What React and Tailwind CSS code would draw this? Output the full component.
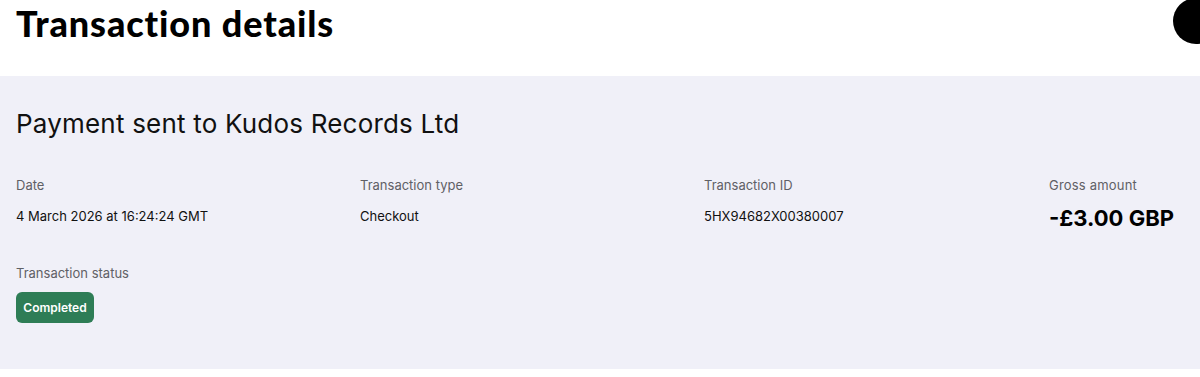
export default function App() {
  const cols = [
    { label: "Date", value: "4 March 2026 at 16:24:24 GMT" },
    { label: "Transaction type", value: "Checkout" },
    { label: "Transaction ID", value: "5HX94682X00380007" },
  ];
  return (
    <div className="w-[1200px] h-[377px] bg-white overflow-hidden relative" style={{ fontFamily: "Inter, 'Liberation Sans', sans-serif" }}>
      <div className="h-[76px] px-4 flex items-start relative">
        <h1 className="text-[36px] leading-none pt-[5px] font-black text-black tracking-[0.9px]" style={{ fontFamily: "Lato, sans-serif" }}>
          Transaction details
        </h1>
        <div className="absolute right-[-19px] top-[-2px] w-[46px] h-[46px] rounded-full bg-black" />
      </div>
      <div className="h-[293px] bg-[#f0f0f8] px-4 pt-[35px]">
        <h2 className="text-[26px] leading-none text-[#111] font-normal tracking-[0.2px]">
          Payment sent to Kudos Records Ltd
        </h2>
        <div className="grid grid-cols-[344px_344px_345px_1fr] mt-[42px]">
          {cols.map((c) => (
            <div key={c.label} className="flex flex-col">
              <span className="text-[13px] leading-none text-[#5f6066]">{c.label}</span>
              <span className="text-[13px] leading-none text-[#111] mt-[18px]">{c.value}</span>
            </div>
          ))}
          <div className="flex flex-col">
            <span className="text-[13px] leading-none text-[#5f6066] tracking-[0.2px]">Gross amount</span>
            <span className="text-[22px] leading-none font-bold text-black mt-[15px]">-£3.00 GBP</span>
          </div>
        </div>
        <div className="mt-[38px] text-[13px] leading-none text-[#5f6066]">Transaction status</div>
        <div className="mt-[12px] inline-flex items-center justify-center w-[78px] h-[31px] rounded-[6px] bg-[#2e7d56] text-white text-[12px] font-semibold">
          Completed
        </div>
      </div>
    </div>
  );
}
